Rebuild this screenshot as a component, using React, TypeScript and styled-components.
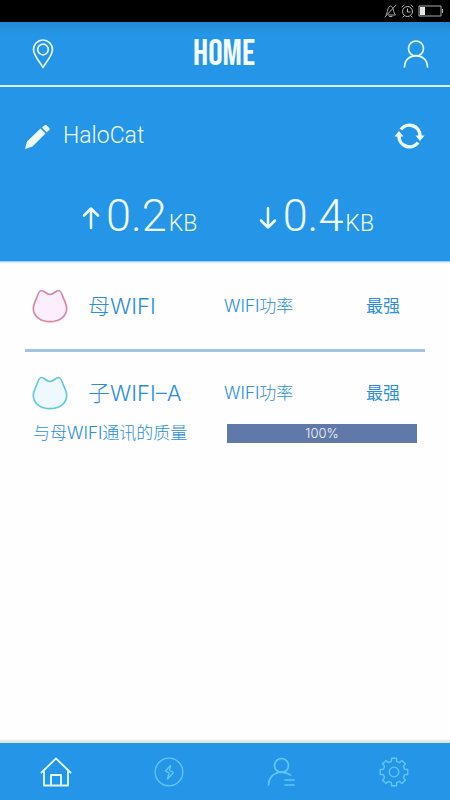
import React from "react";
import styled, { createGlobalStyle } from "styled-components";

const GlobalStyle = createGlobalStyle`
  * { box-sizing: border-box; }
  body { margin: 0; background: #fff; }
  button { font: inherit; color: inherit; background: none; border: 0; padding: 0; cursor: pointer; }
  svg { display: block; flex: none; }
`;

const Page = styled.div`
  min-height: 100vh;
  display: flex;
  flex-direction: column;
  background: #fefefe;
  color: #2b8fdb;
  font-family: Roboto, "Noto Sans CJK SC", sans-serif;
  font-weight: 300;
`;

const StatusBar = styled.div`
  height: 22px;
  padding: 0 6px 0 0;
  display: flex;
  align-items: center;
  justify-content: flex-end;
  gap: 4px;
  background: #000;
`;

const Header = styled.header`
  height: 65px;
  padding: 0 20px 0 28px;
  display: grid;
  grid-template-columns: 30px 1fr 28px;
  align-items: center;
  background: linear-gradient(#2388d3, #2595e7 12px);
  border-bottom: 2px solid #d6f2ff;
`;

const IconButton = styled.button`
  display: flex;
  align-items: center;
  justify-content: center;
`;

const Title = styled.h1`
  margin: 0;
  padding: 2px 12px 0 0;
  text-align: center;
  color: #f4fdff;
  font: 400 36px/40px "Bebas Neue", "Liberation Sans Narrow", sans-serif;
`;

const Summary = styled.section`
  height: 175px;
  padding: 30px 24px 0;
  background: #2595e7;
  border-bottom: 1px solid #9bcdf3;
  box-shadow: 0 1px 2px #d7e9f7;
  color: #effcff;
`;

const NetworkLine = styled.div`
  height: 38px;
  display: flex;
  align-items: center;
  gap: 12px;
`;

const NetworkName = styled.span`
  flex: 1;
  font-size: 23px;
  line-height: 32px;
`;

const Traffic = styled.div`
  margin-top: 33px;
  padding: 0 52px 0 58px;
  display: flex;
  justify-content: space-between;
`;

const Rate = styled.div`
  display: flex;
  align-items: center;
  gap: 6px;
  white-space: nowrap;

  svg { margin-bottom: 4px; }
`;

const Amount = styled.span`
  font-size: 45px;
  line-height: 56px;
`;

const Unit = styled.span`
  margin-left: 2px;
  font-size: 23px;
`;

const Devices = styled.main`
  flex: 1;
  padding: 0 25px;
  font-family: Inter, "Noto Sans CJK SC", sans-serif;
`;

const Device = styled.section<{ $divided?: boolean }>`
  height: ${(p) => (p.$divided ? 90 : 108)}px;
  padding: ${(p) => (p.$divided ? 24 : 21)}px 0 0 7px;
  border-bottom: ${(p) => (p.$divided ? "3px solid #a5c3e2" : "0")};
`;

const DeviceRow = styled.div`
  height: 40px;
  display: grid;
  grid-template-columns: 56px 136px 1fr auto;
  align-items: center;
  padding-right: 25px;
`;

const DeviceName = styled.h2`
  margin: 0;
  font-size: 22px;
  line-height: 32px;
  font-weight: 300;
`;

const Label = styled.span<{ $strong?: boolean }>`
  font-size: 17px;
  line-height: 24px;
  font-weight: ${(p) => (p.$strong ? 400 : 300)};
`;

const QualityRow = styled.div`
  height: 40px;
  padding: 0 8px 0 1px;
  display: grid;
  grid-template-columns: 194px 1fr;
  align-items: center;
`;

const Quality = styled.div`
  height: 19px;
  background: #6079a8;
  color: #f3f6fc;
  font-size: 13px;
  line-height: 19px;
  text-align: center;
`;

const TabBar = styled.nav`
  height: 60px;
  display: grid;
  grid-template-columns: repeat(4, 1fr);
  background: #2595e7;
  border-top: 3px solid #e2e8eb;
`;

const Tab = styled(IconButton)<{ $active?: boolean }>`
  color: ${(p) => (p.$active ? "#e3fbff" : "#62c6fb")};
`;

const stroke = {
  fill: "none",
  stroke: "currentColor",
  strokeLinecap: "round",
  strokeLinejoin: "round",
} as const;

const Cat = ({ line, fill }: { line: string; fill: string }) => (
  <svg width="36" height="36" viewBox="0 0 36 36" aria-hidden="true">
    <path
      d="M5.200 8.500C6.500 4.500 7.500 2.500 9.500 2.500C12.500 2.500 14 6.500 18 6.500C22 6.500 23.500 2.500 26.500 2.500C28.500 2.500 29.500 4.500 30.800 8.500C32 12.500 34.700 15.500 34.700 20.500C34.700 28.500 27 33.700 18 33.700C9 33.700 1.300 28.500 1.300 20.500C1.300 15.500 4 12.500 5.200 8.500Z"
      fill={fill}
      stroke={line}
      strokeWidth="1.700"
    />
  </svg>
);

const Arrow = ({ down }: { down?: boolean }) => (
  <svg width="18" height="24" viewBox="0 0 18 24" {...stroke} strokeWidth="2.500" aria-hidden="true">
    <path d={down ? "M9 2V21.500M2 14.500L9 21.500L16 14.500" : "M9 22V2.500M2 9.500L9 2.500L16 9.500"} />
  </svg>
);

const gearPath = (() => {
  const points: string[] = [];
  for (let i = 0; i < 8; i++) {
    const a = (i * Math.PI) / 4;
    [[-0.24, 11], [-0.18, 14], [0.18, 14], [0.24, 11]].forEach(([d, r]) => {
      points.push(`${(15 + r * Math.sin(a + d)).toFixed(2)} ${(15 - r * Math.cos(a + d)).toFixed(2)}`);
    });
  }
  return `M${points.join("L")}Z`;
})();

const devices = [
  { name: "母WIFI", line: "#d987a9", fill: "#faeffa", power: "最强" },
  { name: "子WIFI–A", line: "#62cadc", fill: "#edf9fe", power: "最强", quality: "100%" },
];

export default function App() {
  return (
    <>
      <GlobalStyle />
      <Page>
        <StatusBar>
          <svg width="13" height="14" viewBox="0 0 13 14" {...stroke} stroke="#aaa" aria-hidden="true">
            <path d="M2 11C4 9 3 3 6.500 2C10 3 9 9 11.500 11H4.500M5.500 12.500H8M1 13L12 1" />
          </svg>
          <svg width="13" height="14" viewBox="0 0 13 14" {...stroke} stroke="#bbb" aria-hidden="true">
            <circle cx="6.500" cy="7.500" r="5" />
            <path d="M6.500 5V8H9M1 3L3 1M10 1L12 3M3 12L2 13M10 12L11 13" />
          </svg>
          <svg width="26" height="12" viewBox="0 0 26 12" aria-hidden="true">
            <path d="M1 1H23V11H1ZM24.500 4V8" fill="none" stroke="#aaa" />
            <path d="M2 2H7V10H2Z" fill="#e6e6e6" />
          </svg>
        </StatusBar>
        <Header>
          <IconButton aria-label="Location">
            <svg width="22" height="30" viewBox="0 0 22 30" {...stroke} stroke="#e6faff" strokeWidth="1.700">
              <path d="M11 28.500C9 24 1.500 17 1.500 10.500A9.500 9.500 0 0 1 20.500 10.500C20.500 17 13 24 11 28.500Z" />
              <circle cx="11" cy="10.500" r="5.300" />
            </svg>
          </IconButton>
          <Title>HOME</Title>
          <IconButton aria-label="Account">
            <svg width="26" height="28" viewBox="0 0 26 28" {...stroke} stroke="#e6faff" strokeWidth="1.700">
              <circle cx="13" cy="8.500" r="7.500" />
              <path d="M1.500 27C2 11.800 24 11.800 24.500 27" />
            </svg>
          </IconButton>
        </Header>
        <Summary>
          <NetworkLine>
            <IconButton aria-label="Rename">
              <svg width="27" height="27" viewBox="0 0 27 27" fill="currentColor">
                <path d="M1 26L3 18.500L16.500 5.500L21.500 10.500L8.500 23.500ZM18 4.500L20.500 2.200Q21.500 1.300 22.500 2.200L25.300 5Q26.300 6 25.300 7L22.700 9.300Z" />
              </svg>
            </IconButton>
            <NetworkName>HaloCat</NetworkName>
            <IconButton aria-label="Refresh">
              <svg width="32" height="26" viewBox="0 0 32 26" fill="none" stroke="currentColor" strokeWidth="3.500">
                <path d="M7 6.500A10.500 10.500 0 0 1 26 13M24 19.500A10.500 10.500 0 0 1 5 13" />
                <path d="M21.500 12.500H30.500L26 18ZM.5 13.500H9.500L5 8Z" fill="currentColor" stroke="none" />
              </svg>
            </IconButton>
          </NetworkLine>
          <Traffic>
            <Rate>
              <Arrow />
              <Amount>0.2<Unit>KB</Unit></Amount>
            </Rate>
            <Rate>
              <Arrow down />
              <Amount>0.4<Unit>KB</Unit></Amount>
            </Rate>
          </Traffic>
        </Summary>
        <Devices>
          {devices.map((d) => (
            <Device key={d.name} $divided={!d.quality}>
              <DeviceRow>
                <Cat line={d.line} fill={d.fill} />
                <DeviceName>{d.name}</DeviceName>
                <Label>WIFI功率</Label>
                <Label $strong>{d.power}</Label>
              </DeviceRow>
              {d.quality && (
                <QualityRow>
                  <Label>与母WIFI通讯的质量</Label>
                  <Quality>{d.quality}</Quality>
                </QualityRow>
              )}
            </Device>
          ))}
        </Devices>
        <TabBar>
          <Tab $active aria-label="Home">
            <svg width="32" height="30" viewBox="0 0 32 30" {...stroke} strokeWidth="1.800">
              <path d="M1.500 15.500L16 1.500L30.500 15.500M4 14V28.500H28V14M11 28V18H21V28" />
            </svg>
          </Tab>
          <Tab aria-label="Power">
            <svg width="30" height="30" viewBox="0 0 30 30" {...stroke} strokeWidth="1.300">
              <circle cx="15" cy="15" r="13.800" />
              <path d="M16.500 8.500L11.500 14L15 16L13.500 22L19.500 15.500L15.500 13.500Z" />
            </svg>
          </Tab>
          <Tab aria-label="Users">
            <svg width="28" height="30" viewBox="0 0 28 30" {...stroke} strokeWidth="1.700">
              <circle cx="14.500" cy="8.500" r="7" />
              <path d="M1.500 28C2 16 14 12 23.500 18M18 23H27M18 28H27" />
            </svg>
          </Tab>
          <Tab aria-label="Settings">
            <svg width="30" height="30" viewBox="0 0 30 30" {...stroke} strokeWidth="1.300">
              <path d={gearPath} />
              <circle cx="15" cy="15" r="4.800" />
            </svg>
          </Tab>
        </TabBar>
      </Page>
    </>
  );
}
